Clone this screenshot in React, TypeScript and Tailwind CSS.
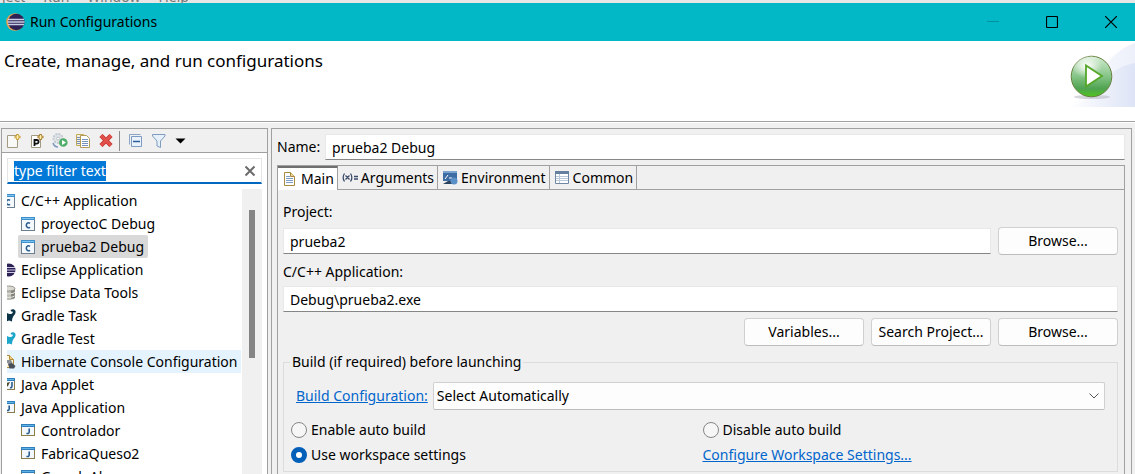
import { useState, type ReactNode } from "react";

type IconName =
  | "c"
  | "j"
  | "applet"
  | "eclipse"
  | "database"
  | "gradle"
  | "gradleTest"
  | "hibernate";

interface TreeItem {
  label: string;
  icon: IconName;
  child?: boolean;
}

const treeItems: TreeItem[] = [
  { label: "C/C++ Application", icon: "c" },
  { label: "proyectoC Debug", icon: "c", child: true },
  { label: "prueba2 Debug", icon: "c", child: true },
  { label: "Eclipse Application", icon: "eclipse" },
  { label: "Eclipse Data Tools", icon: "database" },
  { label: "Gradle Task", icon: "gradle" },
  { label: "Gradle Test", icon: "gradleTest" },
  { label: "Hibernate Console Configuration", icon: "hibernate" },
  { label: "Java Applet", icon: "applet" },
  { label: "Java Application", icon: "j" },
  { label: "Controlador", icon: "j", child: true },
  { label: "FabricaQueso2", icon: "j", child: true },
  { label: "GrandeAbuso", icon: "j", child: true },
];

function Svg({ children }: { children: ReactNode }) {
  return (
    <svg viewBox="0 0 16 16" className="size-4 shrink-0" aria-hidden="true">
      {children}
    </svg>
  );
}

function TreeIcon({ name }: { name: IconName }) {
  switch (name) {
    case "c":
      return (
        <Svg>
          <rect x="1.5" y="1.5" width="13" height="13" fill="#f4f9fe" stroke="#6d7f8e" />
          <path d="M1 1h14v3H1z" fill="#3f8fca" />
          <path d="M2 2h12v1H2z" fill="#7fc3ee" />
          <path d="M10 7.300C8.600 6.300 6.300 6.900 6.300 9.300s2.300 3 3.700 2" fill="none" stroke="#2a5d8f" strokeWidth="1.600" />
        </Svg>
      );
    case "j":
      return (
        <Svg>
          <rect x="1.5" y="1.5" width="13" height="11" fill="#f2f8fe" stroke="#8b7c4b" />
          <path d="M1 1h14v3H1z" fill="#2f7fbd" />
          <path d="M2 2h12v1H2z" fill="#63b2e4" />
          <path d="M9.200 5.500v3.500c0 1.500-1.500 1.800-2.700 1.200" fill="none" stroke="#2a5d8f" strokeWidth="1.600" />
        </Svg>
      );
    case "applet":
      return (
        <Svg>
          <rect x="3.500" y="1.500" width="11" height="11" fill="#f2f8fe" stroke="#8b7c4b" />
          <path d="M3 1h12v3H3z" fill="#2f7fbd" />
          <path d="M4 2h10v1H4z" fill="#63b2e4" />
          <path d="m6 6 4-1-2 4-3 2" fill="#544a30" />
          <path d="M12 5v4c0 1.500-1 2-2 1.500" fill="none" stroke="#2a5d8f" strokeWidth="1.600" />
        </Svg>
      );
    case "eclipse":
      return (
        <Svg>
          <circle cx="9" cy="8" r="6.500" fill="#2c2255" />
          <path d="M2 5.500h13M2 8h14M2 10.500h13" stroke="#cfcbe6" />
        </Svg>
      );
    case "database":
      return (
        <Svg>
          <path d="M2 3.500v9c0 3.300 13 3.300 13 0v-9" fill="#bdbdb5" />
          <path d="M11 5v9c2-.3 4-.8 4-1.500v-9" fill="#85857d" />
          <ellipse cx="8.500" cy="3.500" rx="6.500" ry="2.500" fill="#dadad2" stroke="#96968e" />
          <path d="M2 7c1 2.500 12 2.500 13 0M2 10.500c1 2.500 12 2.500 13 0" fill="none" stroke="#eeeeea" />
        </Svg>
      );
    case "gradle":
    case "gradleTest":
      return (
        <Svg>
          <path
            d="M1 13C1 7 3 4.500 7 5c2 1.500 4.500 1.300 5.500 0 .7-1.200 0-2-1-1.300L10.500 2.300C12 .8 14.800 1 15.500 3.200c.4 2.300-1.200 3.800-2 4.800-1 1.500-1.500 3-1.500 5.500l-3-1-2.500 1z"
            fill={name === "gradle" ? "#0d3446" : "#1fa6cb"}
          />
        </Svg>
      );
    case "hibernate":
      return (
        <Svg>
          <path d="M3.500 1.500h6l4 4v8h-10z" fill="#fff7df" stroke="#b58a35" />
          <path d="M9.500 1.500v4h4" fill="#ecd08a" stroke="#b58a35" />
          <path d="m7 6 4 0 1.500 3-3 1.500-3-2z" fill="#8a8f96" />
          <path d="m8 10 4-1 3.500 3-1.500 2.500H9.500z" fill="#494f59" />
        </Svg>
      );
  }
}

function EclipseLogo() {
  return (
    <svg viewBox="0 0 20 20" className="size-5 shrink-0" aria-hidden="true">
      <circle cx="10" cy="10" r="8.800" fill="#e8a04a" />
      <circle cx="11.300" cy="10" r="8.300" fill="#2c2255" />
      <path d="M3 7.500h16M2.500 10h17M3 12.500h16" stroke="#c9cfe6" strokeWidth="1.500" />
    </svg>
  );
}

function RunBanner() {
  return (
    <svg viewBox="0 0 75 80" className="h-20 w-[75px] shrink-0" aria-hidden="true">
      <defs>
        <linearGradient id="haze" x1="0" x2="1">
          <stop offset="0" stopColor="#fff" />
          <stop offset="1" stopColor="#dde4f6" />
        </linearGradient>
        <linearGradient id="ball" x1="0" y1="0" x2="0" y2="1">
          <stop offset="0" stopColor="#d4ecd2" />
          <stop offset="0.500" stopColor="#84c486" />
          <stop offset="0.800" stopColor="#4fa351" />
          <stop offset="1" stopColor="#4fc51c" />
        </linearGradient>
        <radialGradient id="shine">
          <stop offset="0" stopColor="#fff" />
          <stop offset="1" stopColor="#fff" stopOpacity="0" />
        </radialGradient>
      </defs>
      <path d="M8 66C30 58 42 12 75 2v64z" fill="url(#haze)" opacity="0.550" />
      <path d="M8 66C40 62 38 28 75 22v44z" fill="url(#haze)" />
      <ellipse cx="32" cy="56" rx="18" ry="2" fill="#b9b9c4" opacity="0.600" />
      <circle cx="31.500" cy="35.500" r="20.300" fill="url(#ball)" stroke="#66803f" />
      <ellipse cx="27" cy="25" rx="15" ry="12" fill="url(#shine)" />
      <path d="M26 24.500v21l16-10.500z" fill="#fff" stroke="#55a728" strokeWidth="1.800" />
    </svg>
  );
}

const toolButton = "flex size-5 shrink-0 items-center justify-center";

function Toolbar() {
  return (
    <div className="flex h-6 shrink-0 items-center gap-[3px] border-b border-[#a0a0a0] px-0.5">
      <button className={toolButton} aria-label="New launch configuration">
        <Svg>
          <path d="M1.500 2.500h9l1 2v10h-10z" fill="#f8f8f6" stroke="#a39a83" />
          <path d="M11.500 1v6M8.500 4h6" stroke="#c79a2e" strokeWidth="2.500" />
          <path d="M11.500 2v4M9.500 4h4" stroke="#fff1b0" />
        </Svg>
      </button>
      <button className={toolButton} aria-label="New prototype">
        <Svg>
          <path d="M2.500 2.500h9v12h-9z" fill="#fff" stroke="#a39a83" />
          <path d="M5.500 13V7h2.300a1.800 1.800 0 0 1 0 3.600H5.500" fill="none" stroke="#111" strokeWidth="1.800" />
          <path d="M11.500 1v6M8.500 4h6" stroke="#a77a26" strokeWidth="2.500" />
          <path d="M11.500 2v4M9.500 4h4" stroke="#fff1b0" />
        </Svg>
      </button>
      <button className={toolButton} aria-label="Export">
        <Svg>
          <circle cx="6" cy="5.500" r="4.500" fill="#e2e6ea" stroke="#c3cad1" strokeWidth="2" strokeDasharray="2 1" />
          <circle cx="6" cy="5.500" r="1.500" fill="#fff" stroke="#b5bec6" />
          <path d="M1 10c1 3 2 4 5 4" fill="none" stroke="#7898c3" strokeWidth="1.500" />
          <circle cx="11.300" cy="9.500" r="4.300" fill="#50ae6b" />
          <path d="M10 7v5l4-2.500z" fill="#fff" />
        </Svg>
      </button>
      <button className={toolButton} aria-label="Duplicate">
        <Svg>
          <path d="M1.500 1.500h7v11h-7z" fill="#f3efdc" stroke="#c5a856" />
          <path d="M5.500 2.500h6l3 3v9h-9z" fill="#fff" stroke="#b39a55" />
          <path d="M7 6.500h6M7 8.500h6M7 10.500h6M7 12.500h6M2 4.500h3M2 6.500h3M2 8.500h3M2 10.500h3" stroke="#7492bd" />
        </Svg>
      </button>
      <button className={toolButton} aria-label="Delete">
        <Svg>
          <path d="m3 2.500 10 10M13 2.500l-10 10" stroke="#c93530" strokeWidth="4.500" />
          <path d="m3 2.500 10 10M13 2.500l-10 10" stroke="#e2524b" strokeWidth="2.500" />
        </Svg>
      </button>
      <span className="mr-0.5 h-5 w-px bg-[#8c8c8c]" />
      <button className={toolButton} aria-label="Collapse all">
        <Svg>
          <path d="M2.500 11.500v-10h11" fill="none" stroke="#8aa5c6" />
          <path d="M4.500 3.500h10v10h-10z" fill="#eaf3fc" stroke="#7d9bc0" />
          <path d="M6 8.500h7" stroke="#2c5c9d" strokeWidth="1.500" />
        </Svg>
      </button>
      <button className={toolButton} aria-label="Filter">
        <Svg>
          <path d="M2.500 1.500H15v1.500L10.500 8v6.500L7 13V8L2.500 3z" fill="#e5f0fa" stroke="#7f9cbf" />
        </Svg>
      </button>
      <button className={toolButton} aria-label="Filter menu">
        <Svg>
          <path d="M2.500 5.500h10l-5 5z" fill="#000" />
        </Svg>
      </button>
    </div>
  );
}

function Sidebar() {
  const [filter, setFilter] = useState("type filter text");

  return (
    <aside className="flex w-[267px] shrink-0 flex-col overflow-hidden border border-b-0 border-[#a0a0a0] bg-[#f0f0f0]">
      <Toolbar />
      <div className="flex min-h-0 flex-1 flex-col bg-white px-[5px] pt-[5px]">
        <div className="flex h-[26px] shrink-0 items-center border border-b-2 border-[#e5e5e5] border-b-[#0067c0] pl-1.5 pr-[3px]">
          <input
            aria-label="Filter"
            value={filter}
            onChange={(e) => setFilter(e.target.value)}
            className="field-sizing-content h-5 bg-[#0078d7] text-white outline-none"
          />
          <button aria-label="Clear" onClick={() => setFilter("")} className="ml-auto">
            <Svg>
              <path d="m3.500 3.500 9 9M12.500 3.500l-9 9" stroke="#6b6b6b" strokeWidth="2" />
            </Svg>
          </button>
        </div>
        <div className="mt-[5px] flex min-h-0 flex-1">
          <ul className="min-w-0 flex-1 overflow-hidden">
            {treeItems.map((item) => (
              <li key={item.label} className={`flex h-[23px] ${item.child ? "pl-[11px]" : ""}`}>
                <button
                  className={`flex items-center whitespace-nowrap pr-1 ${
                    item.child ? "gap-[5px] pl-0.5" : "-ml-[7px] gap-[5px]"
                  } ${item.label === "prueba2 Debug" ? "rounded-xs bg-[#d9d9d9]" : ""} ${
                    item.icon === "hibernate" ? "bg-[#e5f3ff]" : ""
                  }`}
                >
                  <TreeIcon name={item.icon} />
                  {item.label}
                </button>
              </li>
            ))}
          </ul>
          <div className="w-5 shrink-0 bg-[#f0f0f0] px-[7px] pt-[21px]">
            <div className="h-[148px] bg-[#858585]" />
          </div>
        </div>
      </div>
    </aside>
  );
}

const tabs: { label: string; icon: ReactNode }[] = [
  {
    label: "Main",
    icon: (
      <Svg>
        <path d="M2.500 1.500h6l4 4v9h-10z" fill="#fff" stroke="#a88b3e" />
        <path d="M8.500 1.500v4h4" fill="#ecd591" stroke="#a88b3e" />
        <path d="M4 5.500h4M4 7.500h7M4 9.500h7M4 11.500h7" stroke="#7d9cc6" />
      </Svg>
    ),
  },
  {
    label: "Arguments",
    icon: (
      <Svg>
        <path
          d="M2.500 3.500c-1.700 2.500-1.700 5.500 0 8M8.500 3.500c1.700 2.500 1.700 5.500 0 8M3.500 5.500l4 4M7.500 5.500l-4 4M12 6.500h4M12 9h4"
          fill="none"
          stroke="#3a4a68"
          strokeWidth="1.300"
        />
      </Svg>
    ),
  },
  {
    label: "Environment",
    icon: (
      <Svg>
        <path d="M1 1h14v10H1z" fill="#3d6ba3" />
        <path d="M1 1h14v2H1z" fill="#7ba3cf" />
        <path d="m3 9 3-4M7 8h3" stroke="#fff" />
        <path d="m1 14 5-3h6v3z" fill="#28425f" />
        <circle cx="12" cy="11" r="3.500" fill="#5b8fc7" />
      </Svg>
    ),
  },
  {
    label: "Common",
    icon: (
      <Svg>
        <path d="M1.500 1.500h13v12h-13z" fill="#fff" stroke="#6f87a3" />
        <path d="M1 1h14v3H1z" fill="#657f9e" />
        <path d="M5.500 4v9M2 6.500h12M2 8.500h12M2 10.500h12" stroke="#b9c8da" />
      </Svg>
    ),
  },
];

const field =
  "h-[26px] min-w-0 flex-1 border border-[#e8e8e8] border-b-[#868686] bg-white px-1.5 outline-none";

function PushButton({ children }: { children: ReactNode }) {
  return (
    <button className="h-7 w-[120px] shrink-0 rounded-sm border border-[#d0d0d0] border-b-[#bcbcbc] bg-[#fdfdfd] whitespace-nowrap">
      {children}
    </button>
  );
}

function Radio({ label, checked }: { label: string; checked?: boolean }) {
  return (
    <label className="flex h-[25px] items-center gap-1">
      <input
        type="radio"
        name="build"
        defaultChecked={checked}
        className="size-4 appearance-none rounded-full border border-[#868686] bg-[#f6f6f6] checked:border-5 checked:border-[#005fb8] checked:bg-white"
      />
      {label}
    </label>
  );
}

function MainTab() {
  return (
    <div className="pt-3 pr-1.5 pl-[5px]">
      <label htmlFor="project" className="block h-5 leading-5">
        Project:
      </label>
      <div className="mt-[5px] flex items-center gap-[7px]">
        <input id="project" defaultValue="prueba2" className={field} />
        <PushButton>Browse...</PushButton>
      </div>
      <label htmlFor="application" className="mt-[7px] block h-5 leading-5">
        C/C++ Application:
      </label>
      <div className="mt-1 flex">
        <input id="application" defaultValue="Debug\prueba2.exe" className={field} />
      </div>
      <div className="mt-1.5 flex justify-end gap-[7px]">
        <PushButton>Variables...</PushButton>
        <PushButton>Search Project...</PushButton>
        <PushButton>Browse...</PushButton>
      </div>
      <fieldset className="mt-1.5 border border-[#dcdcdc] px-3 pb-1">
        <legend className="-ml-1.5 h-5 px-0.5 leading-5">Build (if required) before launching</legend>
        <div className="mt-2.5 flex h-7 items-center gap-[5px]">
          <a href="#build" className="text-[#0066cc] underline">
            Build Configuration:
          </a>
          <div className="relative h-7 flex-1">
            <select
              aria-label="Build Configuration"
              className="h-7 w-full appearance-none rounded-xs border border-[#d0d0d0] border-b-[#bcbcbc] bg-[#fdfdfd] px-[3px]"
            >
              <option>Select Automatically</option>
            </select>
            <svg viewBox="0 0 10 6" className="pointer-events-none absolute top-[11px] right-1.5 h-1.5 w-2.5">
              <path d="m.5.500 4.500 4.500L9.500.5" fill="none" stroke="#555" />
            </svg>
          </div>
        </div>
        <div className="-mx-[5px] mt-[7px] grid grid-cols-2 gap-x-1">
          <Radio label="Enable auto build" />
          <Radio label="Disable auto build" />
          <Radio label="Use workspace settings" checked />
          <a href="#workspace" className="h-[25px] leading-[25px] text-[#0066cc] underline">
            Configure Workspace Settings...
          </a>
        </div>
      </fieldset>
    </div>
  );
}

export default function App() {
  const [activeTab, setActiveTab] = useState("Main");

  return (
    <div className="flex h-screen flex-col overflow-hidden bg-[#f0f0f0] font-['Noto_Sans','Open_Sans',sans-serif] text-sm text-black">
      <div className="flex h-[3px] shrink-0 items-end gap-[18px] overflow-hidden bg-[#e6e6e6] pl-0.5 text-[#777]">
        <span className="-mb-1">ject</span>
        <span className="-mb-1">Run</span>
        <span className="-mb-1">Window</span>
        <span className="-mb-1">Help</span>
      </div>
      <header className="flex h-[38px] shrink-0 items-center gap-[5px] bg-[#02b7c6] pl-[5px]">
        <EclipseLogo />
        <h1>Run Configurations</h1>
        <div className="ml-auto flex h-full">
          <button aria-label="Minimize" className="flex w-[59px] items-center justify-center">
            <svg viewBox="0 0 12 12" className="size-3">
              <path d="M0 5.500h12" stroke="#02939f" />
            </svg>
          </button>
          <button aria-label="Maximize" className="flex w-[59px] items-center justify-center">
            <svg viewBox="0 0 12 12" className="size-3">
              <rect x=".5" y=".5" width="11" height="11" rx="1" fill="none" stroke="#000" strokeWidth="1.200" />
            </svg>
          </button>
          <button aria-label="Close" className="mr-[-5px] flex w-[59px] items-center justify-center">
            <svg viewBox="0 0 12 12" className="size-3">
              <path d="m0 0 12 12M12 0 0 12" stroke="#000" strokeWidth="1.200" />
            </svg>
          </button>
        </div>
      </header>
      <section className="flex h-[81px] shrink-0 justify-between border-b border-[#a0a0a0] bg-white">
        <h2 className="pt-2 pl-1 text-[17px] leading-6">Create, manage, and run configurations</h2>
        <RunBanner />
      </section>
      <main className="flex min-h-0 flex-1 gap-[3px] border-t border-white pt-[5px] pr-[3px] pl-px">
        <Sidebar />
        <section className="flex min-w-0 flex-1 flex-col overflow-hidden border border-b-0 border-[#a0a0a0] pt-[5px] pr-1.5 pl-[5px]">
          <div className="flex shrink-0 items-center">
            <label htmlFor="name" className="w-12">
              Name:
            </label>
            <input id="name" defaultValue="prueba2 Debug" className={field} />
          </div>
          <div className="mt-[5px] flex-1 border border-b-0 border-[#a0a0a0]">
            <div role="tablist" className="flex h-6 border-b border-[#a0a0a0]">
              {tabs.map((tab) => (
                <button
                  key={tab.label}
                  role="tab"
                  aria-selected={activeTab === tab.label}
                  onClick={() => setActiveTab(tab.label)}
                  className={`flex items-center gap-[3px] border-r border-[#a0a0a0] pr-[3px] pl-1 ${
                    activeTab === tab.label ? "-mb-px border-t-2 border-t-[#6f6f6f] bg-white" : ""
                  }`}
                >
                  {tab.icon}
                  {tab.label}
                </button>
              ))}
            </div>
            <MainTab />
          </div>
        </section>
      </main>
    </div>
  );
}
